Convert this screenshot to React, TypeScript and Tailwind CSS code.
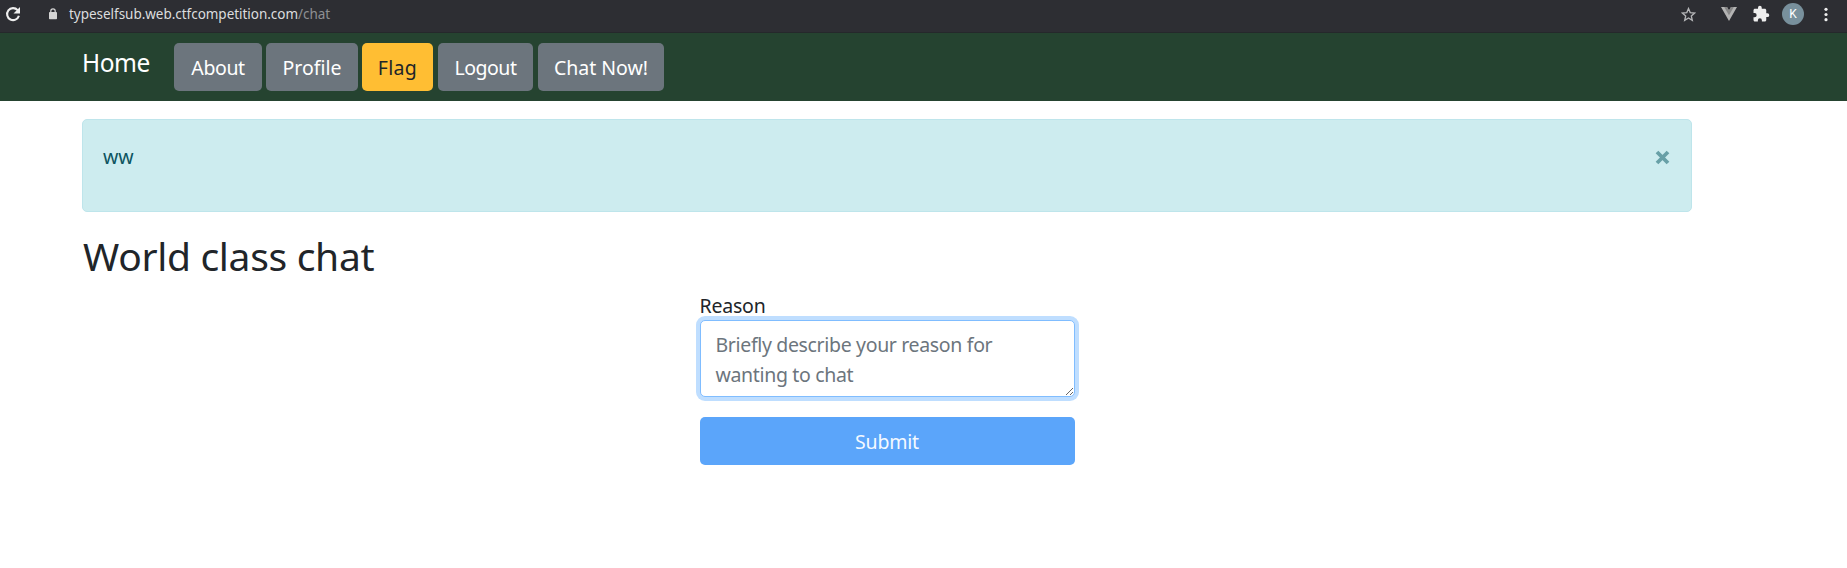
import React from 'react';

function BrowserBar() {
  return (
    <header className="flex h-[33px] items-start border-b border-[#25282b] bg-[#2d2e33] pl-[5px] pr-[19px]">
      <svg className="mt-[6px] size-4 shrink-0" viewBox="0 0 16 16" fill="none">
        <path d="M12.6 4.1A6 6 0 1 0 13.9 9.8" stroke="#eeeeee" strokeWidth="2.1" />
        <path d="M15 1v6.5H8.5z" fill="#eeeeee" />
      </svg>
      <svg className="ml-7 mt-[8px] h-[12px] w-[8px] shrink-0" viewBox="0 0 8 12">
        <path d="M1.8 5V3a2.2 2.2 0 0 1 4.4 0v2" fill="none" stroke="#d4d4d4" strokeWidth="1.2" />
        <rect y="4" width="8" height="7.3" rx="0.8" fill="#d4d4d4" />
      </svg>
      <div className="ml-3 mt-1 whitespace-nowrap text-[13.5px] leading-[21px] tracking-[-0.03px] text-[#dcdddf]">
        typeselfsub.web.ctfcompetition.com<span className="text-[#8e9093]">/chat</span>
      </div>
      <svg className="ml-auto mt-[7px] size-[15px] shrink-0" viewBox="0 0 15 15">
        <path d="M7.5 1.5l1.7 4.1 4.5.4-3.4 2.9 1 4.4-3.8-2.4-3.8 2.4 1-4.4L1.3 6l4.5-.4z" fill="none" stroke="#b6b7b9" strokeWidth="1.3" />
      </svg>
      <svg className="ml-[25px] mt-[7px] h-[14px] w-[16px] shrink-0" viewBox="0 0 16 14">
        <path d="M0 0h6l2 3.5L10 0h6L8 14z" fill="#b3b3b3" />
        <path d="M3.2 0H6l2 3.5L10 0h2.8L8 8.3z" fill="#878787" />
      </svg>
      <svg className="ml-[15px] mt-[5px] size-[18px] shrink-0" viewBox="0 0 24 24" fill="#eeeeee">
        <path d="M20.5 11H19V7c0-1.1-.9-2-2-2h-4V3.5a2.5 2.5 0 0 0-5 0V5H4c-1.1 0-2 .9-2 2v3.8h1.5a2.7 2.7 0 0 1 0 5.4H2V20c0 1.1.9 2 2 2h3.8v-1.5a2.7 2.7 0 0 1 5.4 0V22H17c1.1 0 2-.9 2-2v-4h1.5a2.5 2.5 0 0 0 0-5z" />
      </svg>
      <div className="ml-[12px] mt-[3px] flex size-[22px] shrink-0 items-center justify-center rounded-full bg-[#78909c] font-['Roboto'] text-xs text-white">
        K
      </div>
      <svg className="ml-5 mt-[7px] h-[15px] w-[4px] shrink-0" viewBox="0 0 4 15" fill="#eeeeee">
        <circle cx="2" cy="2.3" r="1.6" />
        <circle cx="2" cy="7.5" r="1.6" />
        <circle cx="2" cy="12.7" r="1.6" />
      </svg>
    </header>
  );
}

const links = [
  { label: 'About', look: 'ml-[25px] w-[88px] bg-[#6c757d] text-white tracking-[-0.4px]' },
  { label: 'Profile', look: 'ml-[4px] w-[92px] bg-[#6c757d] text-white' },
  { label: 'Flag', look: 'ml-[4px] w-[71px] bg-[#ffbe33] text-[#212529] tracking-[0.3px]' },
  { label: 'Logout', look: 'ml-[5px] w-[95px] bg-[#6c757d] text-white tracking-[-0.5px]' },
  { label: 'Chat Now!', look: 'ml-[5px] w-[126px] bg-[#6c757d] text-white' },
];

export default function App() {
  return (
    <div className="min-h-screen bg-white font-['Noto_Sans',sans-serif] text-[19.5px] leading-[30px] text-[#212529]">
      <BrowserBar />
      <nav className="flex h-[68px] bg-[#254330] pl-[82px] pt-[10px]">
        <a className="mt-[5px] w-[67px] whitespace-nowrap text-[24.5px] tracking-[-0.5px] text-white">Home</a>
        {links.map(({ label, look }) => (
          <button key={label} className={`h-[48px] whitespace-nowrap rounded-[5px] pt-px leading-[48px] ${look}`}>
            {label}
          </button>
        ))}
      </nav>
      <main className="ml-[82px] w-[1610px] pt-[18px]">
        <div className="flex h-[93px] justify-between rounded-[5px] border border-[#bee5eb] bg-[#cdecef] pl-5 pr-[21px] pt-[22px] text-[#0c5460]">
          <p>ww</p>
          <svg className="mt-[8px] size-[15px]" viewBox="0 0 15 15">
            <path d="M2 2l11 11M13 2L2 13" stroke="#68a0a7" strokeWidth="3.8" />
          </svg>
        </div>
        <h1 className="mt-5 h-12 pl-px text-[39px] leading-[48px] tracking-[-0.32px]">World class chat</h1>
        <form className="mx-auto flex w-[375px] flex-col pt-[11px]">
          <label className="h-[29px] tracking-[-0.2px]">Reason</label>
          <textarea
            className="h-[77px] resize overflow-hidden rounded-[5px] border border-[#80bdff] bg-white pl-[15px] pr-3 pt-[9px] tracking-[-0.34px] shadow-[0_0_0_4px_#bfdeff] outline-none placeholder:text-[#6c757d]"
            placeholder="Briefly describe your reason for wanting to chat"
          />
          <button type="button" className="mt-5 h-[48px] rounded-[5px] bg-[#5ba5fa] pt-px leading-[48px] tracking-[-0.2px] text-[#f4f9ff]">
            Submit
          </button>
        </form>
      </main>
    </div>
  );
}
